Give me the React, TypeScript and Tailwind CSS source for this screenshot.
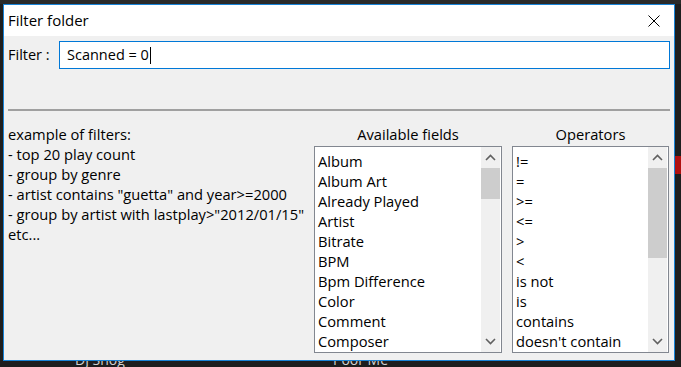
import React from "react";

const fields = ["Album", "Album Art", "Already Played", "Artist", "Bitrate", "BPM", "Bpm Difference", "Color", "Comment", "Composer"];
const ops = ["!=", "=", ">=", "<=", ">", "<", "is not", "is", "contains", "doesn't contain"];

function ChevronUp() {
  return (
    <svg width="11" height="7" viewBox="0 0 11 7" fill="none">
      <path d="M1 6 L5.5 1.5 L10 6" stroke="#606060" strokeWidth="1.6" />
    </svg>
  );
}
function ChevronDown() {
  return (
    <svg width="11" height="7" viewBox="0 0 11 7" fill="none">
      <path d="M1 1 L5.5 5.5 L10 1" stroke="#606060" strokeWidth="1.6" />
    </svg>
  );
}

function ListBox({ items, thumbH, width }: { items: string[]; thumbH: number; width: string }) {
  return (
    <div className={`${width} h-[207px] border border-[#828790] bg-white flex`}>
      <div className="flex-1 flex flex-col pt-[4px] overflow-hidden">
        {items.map((t) => (
          <div key={t} className="h-[20px] leading-[20px] pl-[3px] text-[14.7px] text-black whitespace-nowrap">
            {t}
          </div>
        ))}
      </div>
      <div className="w-[19px] mr-[1px] bg-[#f0f0f0] flex flex-col">
        <div className="h-[21px] flex items-center justify-center">
          <ChevronUp />
        </div>
        <div className="bg-[#cdcdcd]" style={{ height: thumbH }} />
        <div className="flex-1" />
        <div className="h-[21px] flex items-center justify-center">
          <ChevronDown />
        </div>
      </div>
    </div>
  );
}

export default function App() {
  return (
    <div
      className="w-[681px] h-[367px] bg-[#1e1e1e] relative overflow-hidden"
      style={{ fontFamily: '"Open Sans", "Noto Sans", sans-serif' }}
    >
      {/* background app hints */}
      <div className="absolute left-0 top-0 w-[681px] h-[4px] bg-[#2a2a2a]" />
      <div className="absolute left-[675px] top-[156px] w-[6px] h-[18px] bg-[#b01010]" />
      <div className="absolute left-[75px] top-[352px] text-[14px] leading-[16px] text-[#d0d0d0]">DJ Snog</div>
      <div className="absolute left-[333px] top-[352px] text-[14px] leading-[16px] text-[#d0d0d0]">Poor Me</div>

      {/* window */}
      <div className="absolute left-[3px] top-[4px] w-[672px] h-[357px] border border-[#1883d7] bg-[#f0f0f0] flex flex-col">
        <div className="h-[31px] bg-white flex items-center justify-between pl-[4px] pr-[14px]">
          <span className="text-[15px] text-black">Filter folder</span>
          <svg width="12" height="12" viewBox="0 0 12 12">
            <path d="M0.5 0.5 L11.5 11.5 M11.5 0.5 L0.5 11.5" stroke="#000" strokeWidth="1" />
          </svg>
        </div>
        <div className="flex items-center mt-[5px] pl-[4px] pr-[4px]">
          <span className="w-[51px] text-[14.5px] text-black">Filter :</span>
          <div className="flex-1 h-[28px] border border-[#0078d7] bg-white flex items-center pl-[7px] text-[14.5px] text-black">
            <span>Scanned = 0</span>
            <span className="w-[1px] h-[17px] bg-black ml-[1px]" />
          </div>
        </div>
        <div className="mx-[4px] mt-[40px] h-[2px] bg-[#a0a0a0]" />
        <div className="flex flex-1 pl-[4px] pr-[5px] mt-[13px]">
          <div className="flex-1 flex flex-col text-[14.7px] text-black leading-[20px]">
            <div>example of filters:</div>
            <div>- top 20 play count</div>
            <div>- group by genre</div>
            <div>- artist contains "guetta" and year&gt;=2000</div>
            <div>- group by artist with lastplay&gt;"2012/01/15"</div>
            <div>etc...</div>
          </div>
          <div className="flex flex-col w-[188px] mr-[10px]">
            <div className="h-[22px] text-center text-[14.7px] leading-[20px] text-black">Available fields</div>
            <ListBox items={fields} thumbH={31} width="w-[188px]" />
          </div>
          <div className="flex flex-col w-[157px]">
            <div className="h-[22px] text-center text-[14.7px] leading-[20px] text-black">Operators</div>
            <ListBox items={ops} thumbH={90} width="w-[157px]" />
          </div>
        </div>
      </div>
    </div>
  );
}
